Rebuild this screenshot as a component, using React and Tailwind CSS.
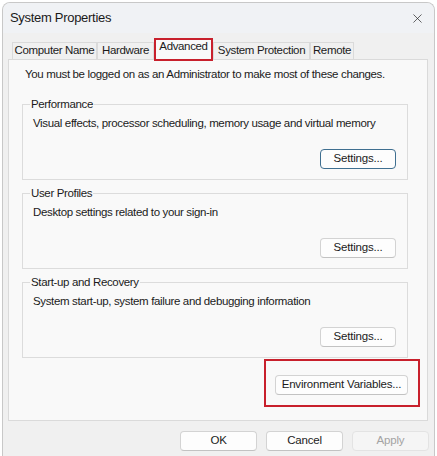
import { X } from "lucide-react";

const font = { fontFamily: '"Liberation Sans", Arial, sans-serif' };

const tabs = [
  { label: "Computer Name", w: "w-[85px]" },
  { label: "Hardware", w: "w-[57px]" },
  { label: "Advanced", w: "w-[59px]", active: true },
  { label: "System Protection", w: "w-[97px]" },
  { label: "Remote", w: "w-[44px]" },
];

const groups = [
  {
    title: "Performance",
    text: "Visual effects, processor scheduling, memory usage and virtual memory",
    focused: true,
  },
  { title: "User Profiles", text: "Desktop settings related to your sign-in" },
  { title: "Start-up and Recovery", text: "System start-up, system failure and debugging information" },
];

// shared body text: small, slightly tightened
const txt = "whitespace-nowrap text-[11.5px] tracking-[-0.35px] text-[#1b1b1b]";

function Button({ children, className = "", focused, disabled }) {
  return (
    <button
      className={`h-[20px] rounded-[4px] border whitespace-nowrap text-[11.5px] tracking-[-0.2px] leading-none ${
        disabled
          ? "border-[#e3e3e3] bg-[#f5f5f5] text-[#a3a3a3]"
          : focused
          ? "border-[#3f6f90] bg-[#fdfdfd] text-[#1b1b1b]"
          : "border-[#d3d3d3] border-b-[#c2c2c2] bg-[#fdfdfd] text-[#1b1b1b]"
      } ${className}`}
    >
      {children}
    </button>
  );
}

function GroupBox({ title, text, focused, className = "" }) {
  return (
    <div className={`relative ml-[13px] mr-[19px] border border-[#dcdcdc] pl-[10px] pr-[11px] pt-[10px] pb-[10px] ${className}`}>
      <span className={`absolute left-[7px] top-[-9px] bg-[#f9f9f9] px-[1px] leading-[16px] ${txt}`}>{title}</span>
      <p className={`leading-[16px] ${txt}`}>{text}</p>
      <div className="mt-[18px] flex justify-end">
        <Button focused={focused} className="w-[76px]">
          Settings...
        </Button>
      </div>
    </div>
  );
}

export default function App() {
  return (
    <div className="h-[456px] w-[437px] overflow-hidden bg-white p-[2px] pb-0" style={font}>
      <div className="flex h-full flex-col overflow-hidden rounded-t-[8px] border border-b-0 border-[#c8c8c8] bg-[#f0f0f0]">
        {/* title bar */}
        <div className="flex h-[30px] shrink-0 items-center justify-between bg-[#f0f2f5] pl-[7px] pr-[9px]">
          <span className="whitespace-nowrap text-[13px] tracking-[-0.3px] text-[#1a1a1a]">System Properties</span>
          <X size={15} strokeWidth={1.1} className="text-[#222]" />
        </div>

        {/* tabs */}
        <div className="mt-[5px] ml-[9px] flex h-[21px] shrink-0 items-end">
          {tabs.map((t) =>
            t.active ? (
              <div
                key={t.label}
                className={`relative z-10 flex h-[21px] ${t.w} items-center justify-center bg-[#f9f9f9] ${txt}`}
              >
                <span className="-mt-[3px]">{t.label}</span>
                <div className="absolute inset-x-0 top-0 bottom-[-2px] border-2 border-[#c8202c]" />
              </div>
            ) : (
              <div
                key={t.label}
                className={`flex h-[17px] ${t.w} items-center justify-center border border-b-0 border-[#dadada] bg-[#f0f0f0] ${txt}`}
              >
                {t.label}
              </div>
            )
          )}
        </div>

        {/* tab page */}
        <div className="ml-[5px] mr-[6px] shrink-0 border border-[#dadada] bg-[#f9f9f9] pt-[6px] pb-[25px]">
          <p className={`pl-[16px] leading-[16px] ${txt}`}>
            You must be logged on as an Administrator to make most of these changes.
          </p>
          <GroupBox {...groups[0]} className="mt-[22px]" />
          <GroupBox {...groups[1]} className="mt-[13px]" />
          <GroupBox {...groups[2]} className="mt-[13px]" />
          <div className="mr-[19px] mt-[13px] flex justify-end">
            <div className="relative">
              <Button className="w-[133px]">Environment Variables...</Button>
              <div className="absolute left-[-11px] right-[-12px] top-[-12px] bottom-[-12px] border-2 border-[#c8202c]" />
            </div>
          </div>
        </div>

        {/* dialog buttons */}
        <div className="mt-[10px] mr-[5px] flex justify-end gap-[9px]">
          <Button className="w-[77px]">OK</Button>
          <Button className="w-[77px]">Cancel</Button>
          <Button disabled className="w-[77px]">
            Apply
          </Button>
        </div>
      </div>
    </div>
  );
}
